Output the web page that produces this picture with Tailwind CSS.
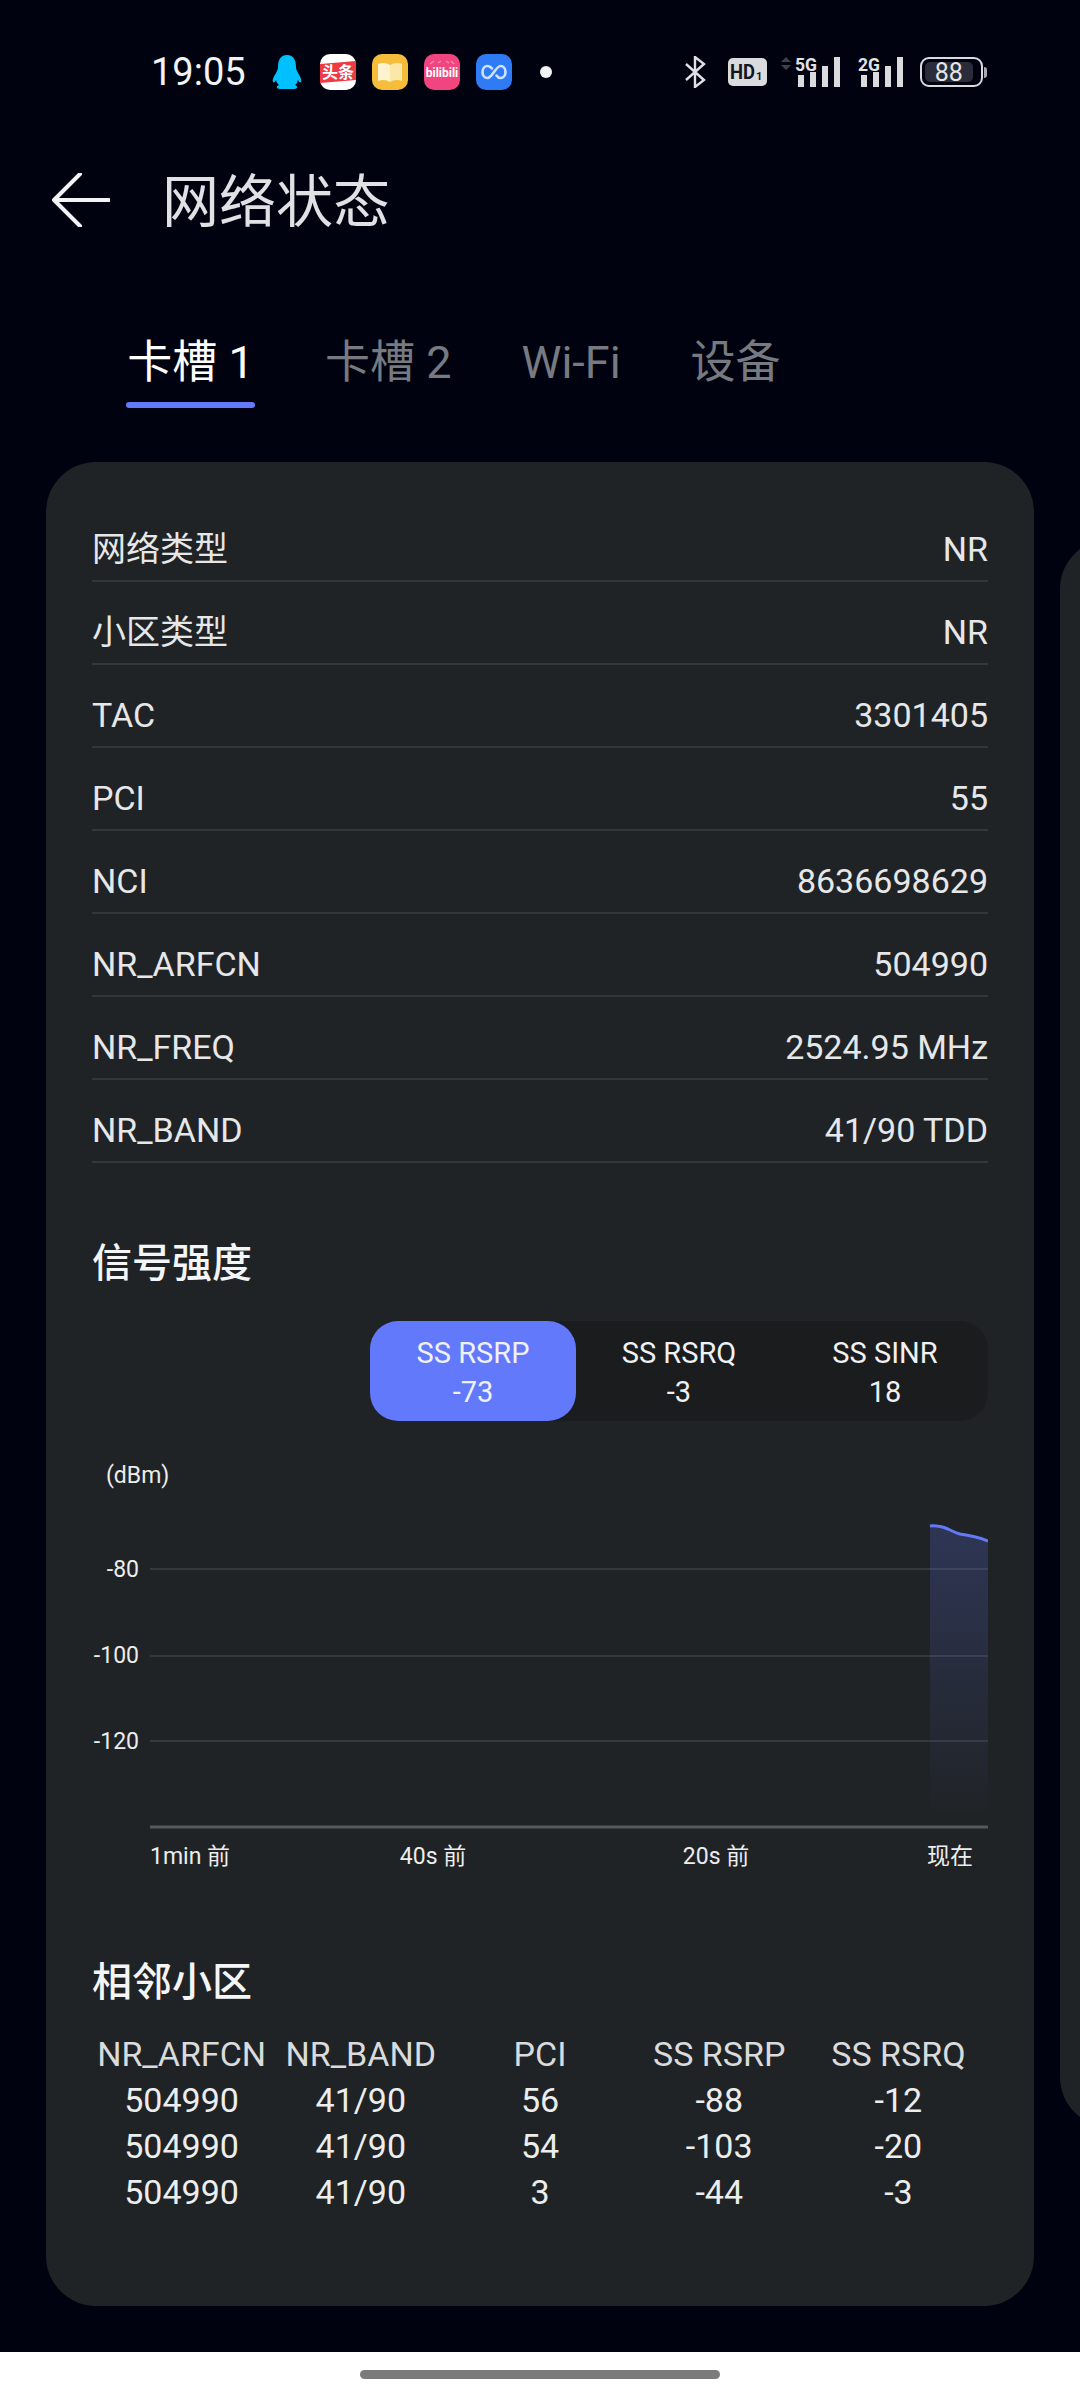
<!DOCTYPE html>
<html lang="zh-CN">
  <head>
    <meta charset="UTF-8" />
    <meta name="viewport" content="width=device-width, initial-scale=1.0" />
    <title>网络状态</title>
    <script src="https://cdn.jsdelivr.net/npm/@tailwindcss/browser@4"></script>
  </head>
  <body class="bg-[#00020f] font-[Roboto,'Noto_Sans_CJK_SC',sans-serif]">
    <div class="flex h-[2400px] w-[1080px] flex-col overflow-hidden">
      <!-- status bar -->
      <div class="flex h-[144px] shrink-0 items-center pl-[151px] pr-[93px]">
        <span class="text-[38px] leading-none text-[#f2f3f5]">19:05</span>
        <svg class="ml-[26px]" width="30" height="34" viewBox="0 0 30 34">
          <path fill="#00c0ff" d="M15 0C8 0 6 6 6 12C6 14 5 16 4 18C2 21 0 25 1 27C2 28 3 27 4 25C4.500 27 5.500 29 7 30C4 31 4 34 8 34L22 34C26 34 26 31 23 30C24.500 29 25.500 27 26 25C27 27 28 28 29 27C30 25 28 21 26 18C25 16 24 14 24 12C24 6 22 0 15 0Z" />
        </svg>
        <svg class="ml-[18px]" width="36" height="36" viewBox="0 0 36 36">
          <rect width="36" height="36" rx="10" fill="#fff" />
          <path fill="#ee3a43" d="M0 10L36 7V26L0 29Z" />
          <text x="18" y="24" text-anchor="middle" font-size="16" font-weight="700" fill="#fff" font-family="Noto Sans CJK SC">头条</text>
        </svg>
        <svg class="ml-[16px]" width="36" height="36" viewBox="0 0 36 36">
          <rect width="36" height="36" rx="10" fill="#f6bd3b" />
          <path fill="#fdf3d0" d="M6 10C10 8 15 9 18 11V28C15 26 10 25 6 27Z" />
          <path fill="#fbe7a8" d="M30 10C26 8 21 9 18 11V28C21 26 26 25 30 27Z" />
        </svg>
        <svg class="ml-[16px]" width="36" height="36" viewBox="0 0 36 36">
          <rect width="36" height="36" rx="10" fill="#f2457f" />
          <path d="M6 10L10 7M14 9L17 7M22 7L25 9M27 7L30 10" stroke="#f88cb0" stroke-width="1.500" />
          <text x="18" y="23" text-anchor="middle" font-size="12" font-weight="700" fill="#fff" font-family="Roboto">bilibili</text>
        </svg>
        <svg class="ml-[16px]" width="36" height="36" viewBox="0 0 36 36">
          <rect width="36" height="36" rx="10" fill="#2f7bf6" />
          <path fill="none" stroke="#cfe2ff" stroke-width="2.600" stroke-linecap="round" d="M16 14.500C14.500 12.500 12.800 12 11.500 12C8.500 12 6.500 14.700 6.500 18C6.500 21.300 8.500 24 11.500 24C16 24 20 12 24.500 12C27.500 12 29.500 14.700 29.500 18C29.500 21.300 27.500 24 24.500 24C23 24 21.500 23 20.500 21.500" />
        </svg>
        <span class="ml-[28px] h-[12px] w-[12px] rounded-full bg-[#f2f3f5]"></span>

        <svg class="ml-auto" width="21" height="32" viewBox="0 0 21 32">
          <path fill="none" stroke="#dfe1e4" stroke-width="2.400" d="M1 8L19 24L10 31V1L19 8L1 24" />
        </svg>
        <div class="ml-[22px] flex h-[28px] w-[39px] items-center justify-center rounded-[5px] bg-[#d9dbde]">
          <svg width="35" height="22" viewBox="0 0 35 22">
            <text x="0" y="18" font-size="20" font-weight="700" fill="#14151c" font-family="Roboto" textLength="25" lengthAdjust="spacingAndGlyphs">HD</text>
            <text x="26" y="19" font-size="11" font-weight="700" fill="#14151c" font-family="Roboto">1</text>
          </svg>
        </div>
        <!-- SIM 1 signal, with data arrows -->
        <svg class="ml-[13px]" width="60" height="40" viewBox="0 -4 60 40">
          <path fill="#3f4149" d="M1 6L6 1L11 6Z M1 9L6 14L11 9Z" />
          <text x="15" y="15" font-size="19" font-weight="700" fill="#e0e2e5" font-family="Roboto" textLength="22" lengthAdjust="spacingAndGlyphs">5G</text>
          <rect x="18" y="19" width="6" height="12" fill="#d9dbde" />
          <rect x="30" y="16" width="6" height="15" fill="#d9dbde" />
          <rect x="42" y="10" width="6" height="21" fill="#d9dbde" />
          <rect x="54" y="1" width="6" height="30" fill="#d9dbde" />
        </svg>
        <!-- SIM 2 signal -->
        <svg class="ml-[18px]" width="45" height="40" viewBox="0 -4 45 40">
          <text x="0" y="15" font-size="19" font-weight="700" fill="#e0e2e5" font-family="Roboto" textLength="22" lengthAdjust="spacingAndGlyphs">2G</text>
          <rect x="3" y="19" width="6" height="12" fill="#d9dbde" />
          <rect x="15" y="16" width="6" height="15" fill="#d9dbde" />
          <rect x="27" y="10" width="6" height="21" fill="#d9dbde" />
          <rect x="39" y="1" width="6" height="30" fill="#d9dbde" />
        </svg>
        <div class="ml-[17px] flex items-center">
          <div class="h-[30px] w-[63px] rounded-[9px] border-2 border-[#d9dbde] p-[3px]">
            <div class="flex h-full w-[90%] items-center justify-center rounded-[5px] bg-[#2a2c3a] text-[25px] leading-none text-[#e4e6e9]">88</div>
          </div>
          <span class="ml-[1px] h-[11px] w-[3px] rounded-r-sm bg-[#a9abaf]"></span>
        </div>
      </div>

      <!-- title row -->
      <div class="flex h-[112px] shrink-0 items-center pl-[52px]">
        <svg width="58" height="54" viewBox="0 0 58 54">
          <path fill="none" stroke="#f2f3f5" stroke-width="4" stroke-linecap="round" stroke-linejoin="round" d="M57 27H2M28 1L2 27L28 53" />
        </svg>
        <h1 class="ml-[52px] pt-[4px] text-[57px] font-normal leading-none text-[#dfe1e4]">网络状态</h1>
      </div>

      <!-- tabs -->
      <div class="mt-[84px] flex shrink-0 gap-[70px] whitespace-nowrap pl-[126px] text-[45px] leading-[46px] text-[#777a80]">
        <div class="flex w-[129px] flex-col items-center text-white">
          <span>卡槽 1</span>
          <span class="mt-[16px] h-[6px] w-full rounded-full bg-[#6279fb]"></span>
        </div>
        <span>卡槽 2</span>
        <span>Wi-Fi</span>
        <span>设备</span>
      </div>

      <!-- pager: current card, next one peeking at the right edge -->
      <div class="mt-[54px] flex min-h-0 flex-1 items-start overflow-hidden pl-[46px]">
        <div class="h-[1844px] w-[988px] shrink-0 rounded-[50px] bg-[#202326] px-[46px] pt-[37px]">
          <div class="text-[34px] leading-[46px] text-[#e6e7e9]">
            <div class="flex h-[83px] items-center justify-between border-b-2 border-[#33363a] pt-[18px]"><span>网络类型</span><span>NR</span></div>
            <div class="flex h-[83px] items-center justify-between border-b-2 border-[#33363a] pt-[18px]"><span>小区类型</span><span>NR</span></div>
            <div class="flex h-[83px] items-center justify-between border-b-2 border-[#33363a] pt-[18px]"><span>TAC</span><span>3301405</span></div>
            <div class="flex h-[83px] items-center justify-between border-b-2 border-[#33363a] pt-[18px]"><span>PCI</span><span>55</span></div>
            <div class="flex h-[83px] items-center justify-between border-b-2 border-[#33363a] pt-[18px]"><span>NCI</span><span>8636698629</span></div>
            <div class="flex h-[83px] items-center justify-between border-b-2 border-[#33363a] pt-[18px]"><span>NR_ARFCN</span><span>504990</span></div>
            <div class="flex h-[83px] items-center justify-between border-b-2 border-[#33363a] pt-[18px]"><span>NR_FREQ</span><span>2524.95 MHz</span></div>
            <div class="flex h-[83px] items-center justify-between border-b-2 border-[#33363a] pt-[18px]"><span>NR_BAND</span><span>41/90 TDD</span></div>
          </div>

          <h2 class="mt-[77px] text-[40px] font-medium leading-[48px] text-[#f4f5f6]">信号强度</h2>

          <div class="ml-auto mt-[33px] grid h-[100px] w-[618px] grid-cols-3 rounded-[28px] bg-[#1b1c1e] text-center text-[29px] leading-[39px] text-[#f0f1f3]">
            <div class="flex flex-col justify-center rounded-[28px] bg-[#6279fb] pt-[3px]"><span>SS RSRP</span><span>-73</span></div>
            <div class="flex flex-col justify-center pt-[3px]"><span>SS RSRQ</span><span>-3</span></div>
            <div class="flex flex-col justify-center pt-[3px]"><span>SS SINR</span><span>18</span></div>
          </div>

          <!-- signal history chart -->
          <svg class="mt-[29px] block" width="896" height="430" viewBox="0 0 896 430" font-family="Roboto, 'Noto Sans CJK SC', sans-serif" font-size="23" fill="#eceded">
            <defs>
              <linearGradient id="area" x1="0" y1="0" x2="0" y2="1">
                <stop offset="0" stop-color="#6279fb" stop-opacity="0.22" />
                <stop offset="1" stop-color="#6279fb" stop-opacity="0" />
              </linearGradient>
            </defs>
            <text x="14" y="33">(dBm)</text>
            <text x="47" y="127" text-anchor="end">-80</text>
            <text x="47" y="213" text-anchor="end">-100</text>
            <text x="47" y="299" text-anchor="end">-120</text>
            <path d="M58 119H896M58 206H896M58 291H896" stroke="#35383c" stroke-width="2" />
            <path d="M838 76C846 75 851 77 856 79C860 81 864 83 868 84C876 85 886 87 896 91V366H838Z" fill="url(#area)" />
            <path d="M838 76C846 75 851 77 856 79C860 81 864 83 868 84C876 85 886 87 896 91" fill="none" stroke="#6279fb" stroke-width="3" />
            <path d="M58 377H896" stroke="#55585c" stroke-width="3" />
            <text x="58" y="414">1min 前</text>
            <text x="341" y="414" text-anchor="middle">40s 前</text>
            <text x="624" y="414" text-anchor="middle">20s 前</text>
            <text x="858" y="414" text-anchor="middle">现在</text>
          </svg>

          <h2 class="mt-[79px] text-[40px] font-medium leading-[48px] text-[#f4f5f6]">相邻小区</h2>

          <div class="mt-[24px] grid grid-cols-5 text-center text-[34px] leading-[46px] text-[#eceded]">
            <span class="text-[#d9dbdd]">NR_ARFCN</span><span class="text-[#d9dbdd]">NR_BAND</span><span class="text-[#d9dbdd]">PCI</span><span class="text-[#d9dbdd]">SS RSRP</span><span class="text-[#d9dbdd]">SS RSRQ</span>
            <span>504990</span><span>41/90</span><span>56</span><span>-88</span><span>-12</span>
            <span>504990</span><span>41/90</span><span>54</span><span>-103</span><span>-20</span>
            <span>504990</span><span>41/90</span><span>3</span><span>-44</span><span>-3</span>
          </div>
        </div>
        <div class="ml-[26px] mt-[77px] h-[1588px] w-[988px] shrink-0 rounded-[50px] bg-[#202326]"></div>
      </div>

      <!-- gesture bar -->
      <div class="flex h-[48px] shrink-0 justify-center bg-white pt-[18px]">
        <span class="h-[9px] w-[360px] rounded-full bg-[#7b7b7b]"></span>
      </div>
    </div>
  </body>
</html>
